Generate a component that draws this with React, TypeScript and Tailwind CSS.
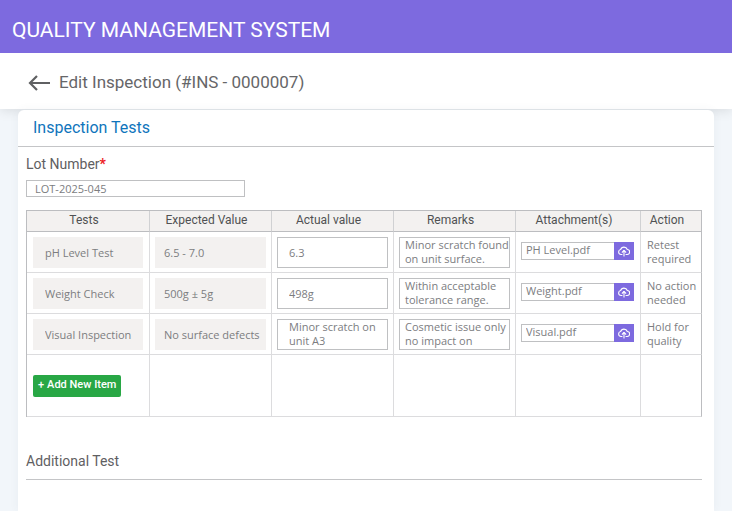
import { useState } from "react";

interface InspectionTest {
  id: number;
  name: string;
  expected: string;
  actual: string;
  remarks: string;
  attachment: string;
  action: string;
}

const initialTests: InspectionTest[] = [
  {
    id: 1,
    name: "pH Level Test",
    expected: "6.5 - 7.0",
    actual: "6.3",
    remarks: "Minor scratch found\non unit surface.",
    attachment: "PH Level.pdf",
    action: "Retest required",
  },
  {
    id: 2,
    name: "Weight Check",
    expected: "500g ± 5g",
    actual: "498g",
    remarks: "Within acceptable\ntolerance range.",
    attachment: "Weight.pdf",
    action: "No action needed",
  },
  {
    id: 3,
    name: "Visual Inspection",
    expected: "No surface defects",
    actual: "Minor scratch on\nunit A3",
    remarks: "Cosmetic issue only\nno impact on",
    attachment: "Visual.pdf",
    action: "Hold for quality",
  },
];

const headers = ["Tests", "Expected Value", "Actual value", "Remarks", "Attachment(s)", "Action"];

const cell = "border-r border-b border-[#dcdcde] last:border-r-[#bcbdc0]";
const fieldText = "text-[11px] text-[#7c7d7f] font-['Open_Sans',sans-serif]";

function UploadIcon() {
  return (
    <svg viewBox="0 0 24 24" className="h-3 w-3" fill="none" stroke="currentColor" strokeWidth="2.200" strokeLinecap="round" strokeLinejoin="round" aria-hidden="true">
      <path d="M8 19H6.200a5 5 0 0 1-.9-9.900A7 7 0 0 1 18.600 9 5 5 0 0 1 18 19h-2" />
      <path d="M12 22V11" />
      <path d="m8.500 14.500 3.500-3.500 3.500 3.500" />
    </svg>
  );
}

interface FieldProps {
  label: string;
  value: string;
  readOnly?: boolean;
  pad?: string;
}

function TextField({ label, value, readOnly, pad = "pl-[11px]" }: FieldProps) {
  const look = readOnly ? "bg-[#f3f1f0]" : "border border-[#bfc0c2] bg-white";
  return (
    <input
      aria-label={label}
      defaultValue={value}
      readOnly={readOnly}
      className={`block h-[31px] w-full ${pad} ${look} ${fieldText}`}
    />
  );
}

function NoteField({ label, value, pad = "pl-[5px]" }: FieldProps) {
  return (
    <textarea
      aria-label={label}
      defaultValue={value}
      rows={2}
      className={`block h-[31px] w-full resize-none overflow-hidden whitespace-pre border border-[#bfc0c2] bg-white leading-[14px] ${pad} ${fieldText}`}
    />
  );
}

export default function App() {
  const [tests] = useState(initialTests);

  return (
    <div className="flex min-h-screen flex-col bg-[#f2f6fa] font-[Roboto,sans-serif] text-[#5f6062]">
      {/* App bar */}
      <header className="relative z-10 flex h-[53px] items-center bg-[#7d6adf] px-3 pt-2">
        <span className="text-[21px] text-white">QUALITY MANAGEMENT SYSTEM</span>
      </header>

      {/* Page title */}
      <div className="flex h-14 items-center gap-2 bg-white pt-1 pl-7 shadow-[0_1px_12px_rgba(0,0,0,0.12)]">
        <a href="#inspections" aria-label="Back">
          <svg viewBox="0 0 23 18" className="h-[18px] w-[23px]" fill="none" stroke="#5f6062" strokeWidth="2.200" aria-hidden="true">
            <path d="M22 9H2.500M9 2 2 9l7 7" />
          </svg>
        </a>
        <h1 className="text-[17px] text-[#666668]">Edit Inspection (#INS - 0000007)</h1>
      </div>

      <main className="relative mx-[18px] mt-px flex-1 rounded-t-md bg-white shadow-[0_0_10px_rgba(60,80,100,0.06)]">
        <h2 className="h-9 pl-[15px] text-[16px] leading-9 text-[#0f75bc]">Inspection Tests</h2>

        <div className="border-t border-[#c4c5c7] pr-3 pl-[8px]">
          {/* Lot number */}
          <label htmlFor="lot" className="block pt-[7px] text-[14px] leading-5">
            Lot Number<span className="font-bold text-[#ed1c24]">*</span>
          </label>
          <input
            id="lot"
            defaultValue="LOT-2025-045"
            className={`mt-[6px] block h-[17px] w-[219px] border border-[#bfc0c2] px-2 ${fieldText}`}
          />

          {/* Tests table */}
          <table className="mt-[13px] w-full table-fixed border-separate border-spacing-0 border-t border-l border-[#bcbdc0]">
            <colgroup>
              <col className="w-[123px]" />
              <col className="w-[122px]" />
              <col className="w-[122px]" />
              <col className="w-[122px]" />
              <col className="w-[125px]" />
              <col className="w-[61px]" />
            </colgroup>
            <thead>
              <tr>
                {headers.map((h) => (
                  <th
                    key={h}
                    className="h-[21px] border-r border-b border-r-[#d0d1d3] border-b-[#bcbdc0] bg-[#f3f1f0] pr-2 pb-[2px] text-[12px] leading-[18px] font-normal text-[#505153] last:border-r-[#bcbdc0]"
                  >
                    {h}
                  </th>
                ))}
              </tr>
            </thead>
            <tbody>
              {tests.map((t) => (
                <tr key={t.id} className="h-[41px]">
                  <td className={`px-[6px] ${cell}`}>
                    <TextField label="Test" value={t.name} readOnly pad="pl-3" />
                  </td>
                  <td className={`px-[5px] ${cell}`}>
                    <TextField label="Expected value" value={t.expected} readOnly pad="pl-[9px]" />
                  </td>
                  <td className={`px-[5px] ${cell}`}>
                    {t.actual.includes("\n") ? (
                      <NoteField label="Actual value" value={t.actual} pad="pl-[11px]" />
                    ) : (
                      <TextField label="Actual value" value={t.actual} />
                    )}
                  </td>
                  <td className={`px-[5px] ${cell}`}>
                    <NoteField label="Remarks" value={t.remarks} />
                  </td>
                  <td className={`pr-[6px] pb-[3px] pl-[5px] ${cell}`}>
                    <div className="flex h-[18px]">
                      <input
                        aria-label="Attachment"
                        defaultValue={t.attachment}
                        readOnly
                        className={`min-w-0 flex-1 border border-r-0 border-[#bfc0c2] px-1 ${fieldText}`}
                      />
                      <button aria-label="Upload attachment" className="flex w-5 items-center justify-center bg-[#7d6adf] text-white">
                        <UploadIcon />
                      </button>
                    </div>
                  </td>
                  <td className={`pl-[6px] leading-[14px] ${cell} ${fieldText}`}>{t.action}</td>
                </tr>
              ))}
              <tr className="h-[62px]">
                <td className={`px-[6px] ${cell}`}>
                  <button className="flex h-[22px] items-center gap-[3px] rounded-[2px] bg-[#28a745] px-[5px] text-[11px] font-medium whitespace-nowrap text-white">
                    <span>+</span>
                    Add New Item
                  </button>
                </td>
                {headers.slice(1).map((h) => (
                  <td key={h} className={cell}></td>
                ))}
              </tr>
            </tbody>
          </table>

          {/* Additional test */}
          <h3 className="mt-[34px] border-b border-[#c4c5c7] pb-2 text-[14px] leading-5">Additional Test</h3>
        </div>
      </main>
    </div>
  );
}
